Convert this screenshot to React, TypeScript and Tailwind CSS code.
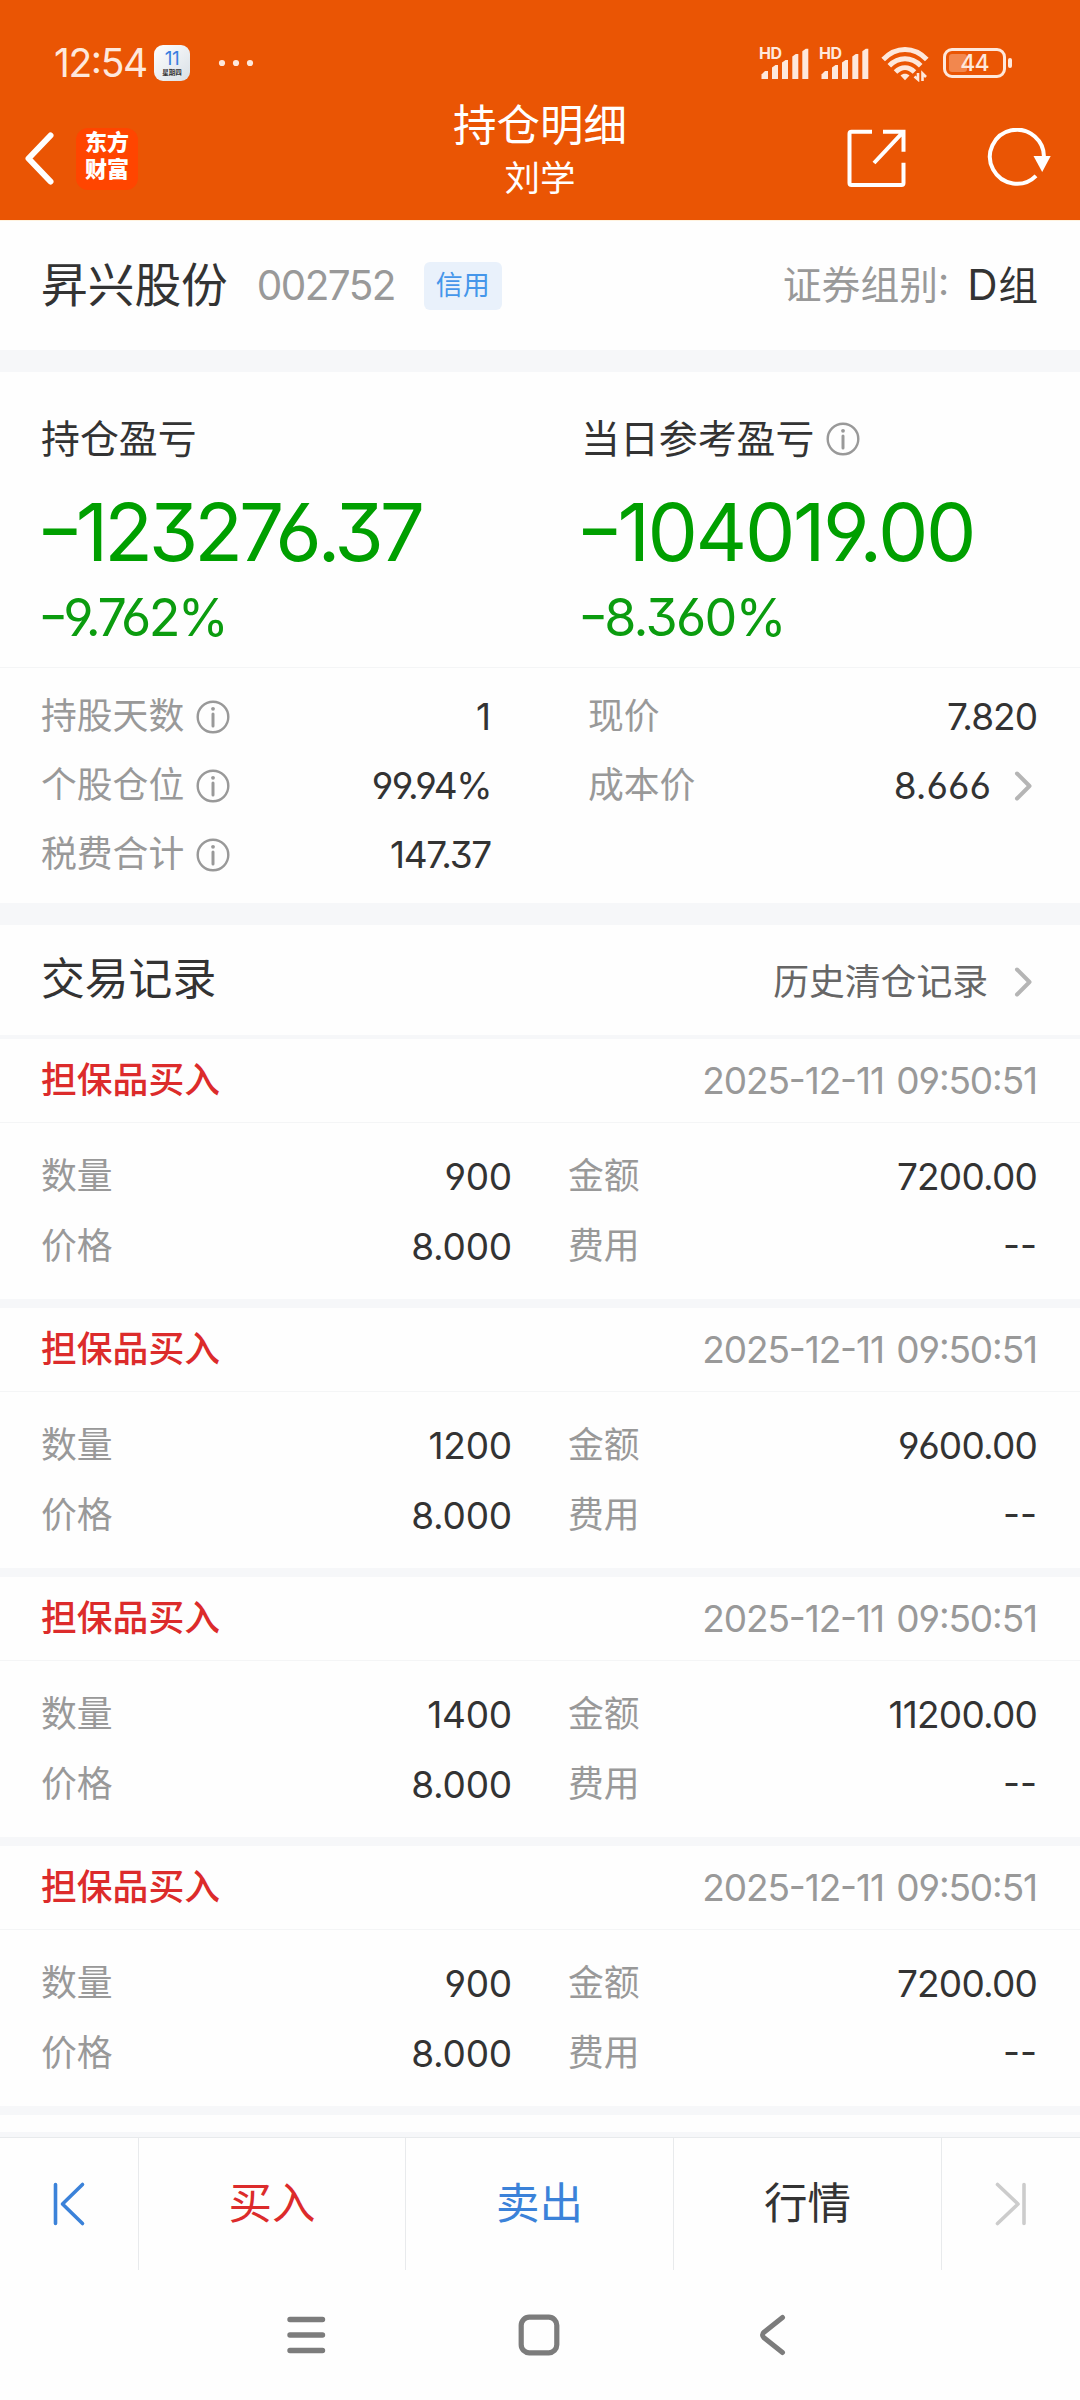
import { clsx } from "clsx";

const records = [
  { type: "担保品买入", time: "2025-12-11 09:50:51", qty: "900", amount: "7200.00", price: "8.000", fee: "--" },
  { type: "担保品买入", time: "2025-12-11 09:50:51", qty: "1200", amount: "9600.00", price: "8.000", fee: "--" },
  { type: "担保品买入", time: "2025-12-11 09:50:51", qty: "1400", amount: "11200.00", price: "8.000", fee: "--" },
  { type: "担保品买入", time: "2025-12-11 09:50:51", qty: "900", amount: "7200.00", price: "8.000", fee: "--" },
];

function Signal() {
  return (
    <div className="relative w-[51px] h-9">
      <span className="absolute left-0 top-0 text-[16px] leading-none font-bold tracking-[-0.4px]">HD</span>
      <svg width="51" height="36" viewBox="0 0 51 36" fill="currentColor">
        <path d="M2.5 34V29.5L6 26H9V34Z" />
        <path d="M13 34V22.5L16.5 20H19V34Z" />
        <path d="M23 34V17.5L26.5 15H29V34Z" />
        <path d="M33.3 34V11.5L36.8 9H39.3V34Z" />
        <path d="M43.3 34V6.2L46.8 3.7H49.3V34Z" />
      </svg>
    </div>
  );
}

function InfoIcon() {
  return (
    <svg width="34" height="34" viewBox="0 0 34 34" fill="none" className="text-[#999]">
      <circle cx="17" cy="17" r="15.3" stroke="currentColor" strokeWidth="2.4" />
      <circle cx="17" cy="8.8" r="1.9" fill="currentColor" />
      <path d="M17 14V26" stroke="currentColor" strokeWidth="3" strokeLinecap="round" />
    </svg>
  );
}

function Chevron() {
  return (
    <svg width="20" height="32" viewBox="0 0 20 32" fill="none" stroke="#b5b5b5" strokeWidth="4" strokeLinecap="round" strokeLinejoin="round">
      <path d="M4 3.5L16.5 16L4 28.5" />
    </svg>
  );
}

function Header() {
  return (
    <header className="h-[220px] bg-[#ea5504] text-white">
      <div className="flex items-start pt-[45px] pl-[54px] pr-[68px] text-[#fee8dc]">
        <span className="w-[100px] text-[39px] leading-9 tracking-[-1.4px] whitespace-nowrap">12:54</span>
        <div className="flex w-9 h-9 flex-col items-center rounded-[9px] bg-linear-to-br from-white to-[#d9e0e6] pt-[6px]">
          <span className="text-[19px] leading-[16px] tracking-[-0.5px] text-[#3b7fe0]">11</span>
          <span className="mt-[2px] text-[6.5px] leading-[8px] font-bold text-[#333]">星期四</span>
        </div>
        <svg width="36" height="36" viewBox="0 0 36 36" fill="currentColor" className="ml-7">
          <circle cx="4" cy="18" r="3.1" />
          <circle cx="18" cy="18" r="3.1" />
          <circle cx="32" cy="18" r="3.1" />
        </svg>
        <div className="ml-auto flex">
          <Signal />
          <div className="ml-[9px]">
            <Signal />
          </div>
          <svg width="48" height="37" viewBox="0 0 48 37" fill="none" stroke="currentColor" strokeWidth="5" className="ml-[11px] mr-px">
            <path d="M2.2 14.5C15 1.2 33 1.2 45.8 14.5" />
            <path d="M8.3 20.8C17.5 11.5 30.5 11.5 39.7 20.8" />
            <path d="M14.5 27C20.3 21.3 27.7 21.3 33.5 27" />
            <path d="M19.5 30.5C22 28 26 28 28.5 30.5L24 35.2Z" fill="currentColor" stroke="none" />
            <path d="M37 28V34.5L33.5 31.5M41.5 36V28.5L45 32" strokeWidth="2.6" />
          </svg>
          <div className="relative ml-[13px] mt-[3px] h-[30px] w-[63px] rounded-[9px] border-[3px] border-current p-[3px]">
            <div className="h-[18px] w-[18px] rounded-[3px] bg-[#f2874e]" />
            <span className="absolute inset-0 text-center text-[23px] leading-6 font-medium tracking-[-0.8px]">44</span>
          </div>
          <div className="ml-[2px] mt-[13px] h-[10px] w-1 rounded-sm bg-current" />
        </div>
      </div>

      <div className="grid h-[139px] grid-cols-[1fr_auto_1fr] items-start">
        <div className="flex pl-[23px] pt-[46px]">
          <svg width="32" height="62" viewBox="0 0 32 62" fill="none" stroke="#fff" strokeWidth="6" strokeLinecap="round" strokeLinejoin="round">
            <path d="M27.5 7.5L5.5 30.5L27.5 53.5" />
          </svg>
          <div className="ml-[21px] flex h-[62px] w-[62px] flex-col items-center rounded-[12px] bg-[#ff4500] pt-px text-[22px] leading-[27px] font-black">
            <span>东方</span>
            <span>财富</span>
          </div>
        </div>
        <div className="flex flex-col items-center pt-4">
          <h1 className="text-[43.5px] leading-[54px]">持仓明细</h1>
          <span className="text-[35.5px] leading-[54px]">刘学</span>
        </div>
        <div className="flex justify-end pr-[27px] pt-[46px]">
          <svg width="62" height="62" viewBox="0 0 62 62" fill="none" stroke="#fff" strokeWidth="4" strokeLinejoin="round">
            <path d="M27 3.7H6.5Q4.5 3.7 4.5 5.7V55Q4.5 57 6.5 57H56.5Q58.5 57 58.5 55V34.7" />
            <path d="M38 3.7H58.5V23.7M58 4.2L29 35" strokeLinejoin="miter" />
          </svg>
          <svg width="68" height="62" viewBox="0 0 68 62" fill="none" stroke="#fff" strokeWidth="4" className="ml-[78px]">
            <path d="M58.8 31A27 27 0 1 0 51 47.8" />
            <path d="M48.5 28H65.7L57.2 44Z" fill="#fff" stroke="none" />
          </svg>
        </div>
      </div>
    </header>
  );
}

type DetailProps = { label: string; value: string; valueClass?: string; info?: boolean; arrow?: boolean };

function Detail({ label, value, valueClass, info, arrow }: DetailProps) {
  return (
    <div className="flex h-[69px] items-center">
      <span className="mr-3 pt-px text-[35.8px] text-[#999]">{label}</span>
      {info && <InfoIcon />}
      <span className={clsx("ml-auto text-[37px]", valueClass)}>{value}</span>
      {arrow && (
        <div className="ml-[22px] mr-1">
          <Chevron />
        </div>
      )}
    </div>
  );
}

type PnlProps = { label: string; amount: string; percent: string; amountClass: string; percentClass: string; info?: boolean };

function Pnl({ label, amount, percent, amountClass, percentClass, info }: PnlProps) {
  return (
    <div>
      <div className="flex h-[50px] items-center gap-3 text-[38.9px]">
        {label}
        {info && <InfoIcon />}
      </div>
      <div className={clsx("mt-[18px] text-[80px] leading-[100px] text-[#009f00]", amountClass)}>
        <span className="mr-[2px] inline-block scale-x-130">-</span>
        {amount}
      </div>
      <div className={clsx("mt-[6px] text-[52px] leading-[60px] text-[#0b9c0f]", percentClass)}>
        <span className="mr-px inline-block scale-x-125">-</span>
        {percent}
      </div>
    </div>
  );
}

function Field({ label, value, valueClass }: { label: string; value: string; valueClass: string }) {
  return (
    <div className="flex h-[70px] items-center justify-between">
      <span className="pt-px text-[35.8px] text-[#999]">{label}</span>
      <span className={clsx("text-[37px]", valueClass)}>{value}</span>
    </div>
  );
}

export default function App() {
  return (
    <div
      className="flex h-[2400px] w-[1080px] flex-col overflow-hidden bg-[#fefefe] leading-none text-[#333] font-['Inter','Noto_Sans_CJK_SC',sans-serif] [font-feature-settings:'cv03','cv04','cv09','case']"
    >
      <Header />

      <section className="flex h-[130px] items-center border-t border-[#fff3df] pl-[41px] pr-[42px]">
        <h2 className="text-[46.7px]">昇兴股份</h2>
        <span className="ml-[29px] mt-[2px] text-[40.5px] tracking-[-1.6px] text-[#999]">002752</span>
        <span className="ml-[29px] flex h-12 w-[78px] items-center justify-center rounded-md bg-[#e9f1fb] text-[27px] text-[#4596ea]">
          信用
        </span>
        <span className="ml-auto text-[38.8px] text-[#999]">证券组别:</span>
        <span className="ml-[18px] text-[39.5px]">
          <span className="mr-px text-[42px]">D</span>组
        </span>
      </section>
      <div className="h-[22px] bg-[#f6f7f9]" />

      <section>
        <div className="grid h-[295px] grid-cols-[540px_1fr] pl-[41px] pt-[42px]">
          <Pnl label="持仓盈亏" amount="123276.37" percent="9.762%" amountClass="tracking-[-4.1px]" percentClass="tracking-[-2.6px]" />
          <Pnl label="当日参考盈亏" amount="104019.00" percent="8.360%" amountClass="tracking-[-2.4px]" percentClass="tracking-[-1.7px]" info />
        </div>
        <div className="flex h-[236px] justify-between border-t border-[#f4f5f6] pl-[41px] pr-[43px] pt-[14px]">
          <div className="w-[450px]">
            <Detail label="持股天数" value="1" info />
            <Detail label="个股仓位" value="99.94%" valueClass="tracking-[-1.5px]" info />
            <Detail label="税费合计" value="147.37" valueClass="tracking-[-1.3px]" info />
          </div>
          <div className="w-[449px]">
            <Detail label="现价" value="7.820" valueClass="tracking-[-1px]" />
            <Detail label="成本价" value="8.666" arrow />
          </div>
        </div>
      </section>
      <div className="h-[22px] bg-[#f6f7f9]" />

      <section className="flex h-[114px] items-center border-b-4 border-[#f6f7f9] pl-[41px] pr-[47px]">
        <h2 className="text-[43.8px]">交易记录</h2>
        <span className="ml-auto mr-[25px] mt-[6px] text-[35.8px] text-[#666]">历史清仓记录</span>
        <div className="mt-[3px]">
          <Chevron />
        </div>
      </section>

      {records.map((r, i) => (
        <article key={i} className="h-[269px] shrink-0 border-b-[9px] border-[#f6f7f9]">
          <div className="flex h-[84px] items-center justify-between border-b border-[#f4f5f6] pl-[41px] pr-[43px]">
            <span className="pt-px text-[35.8px] font-medium text-[#dc2b2b]">{r.type}</span>
            <span className="text-[37px] tracking-[-1.1px] [word-spacing:3px] text-[#999]">{r.time}</span>
          </div>
          <div className="grid grid-cols-[471px_469px] justify-between pl-[41px] pr-[43px] pt-[18px]">
            <Field label="数量" value={r.qty} valueClass="tracking-[-0.2px]" />
            <Field label="金额" value={r.amount} valueClass="tracking-[-0.8px]" />
            <Field label="价格" value={r.price} valueClass="tracking-[-0.2px]" />
            <Field label="费用" value={r.fee} valueClass="tracking-[0px]" />
          </div>
        </article>
      ))}

      <div className="mt-[17px] h-[5px] shrink-0 bg-[#f6f7f9]" />
      <footer className="grid h-[133px] shrink-0 grid-cols-[139px_267px_268px_268px_1fr] divide-x divide-[#e8eaec] border-t border-[#e8eaec] text-[43.5px]">
        <button className="flex items-center justify-center">
          <svg width="34" height="48" viewBox="0 0 34 48" fill="none" stroke="#3b82d9" strokeWidth="3.6" strokeLinecap="round" strokeLinejoin="round">
            <path d="M3.5 4.5V43.5M30.5 4.5L10.5 24L30.5 43.5" />
          </svg>
        </button>
        <button className="text-[#dc2b2b]">买入</button>
        <button className="text-[#3b82d9]">卖出</button>
        <button>行情</button>
        <button className="flex items-center justify-center">
          <svg width="34" height="48" viewBox="0 0 34 48" fill="none" stroke="#ccc" strokeWidth="3.6" strokeLinecap="round" strokeLinejoin="round">
            <path d="M30 4.5V43.5M3.5 4.5L24 24L3.5 43.5" />
          </svg>
        </button>
      </footer>

      <nav className="flex h-[130px] shrink-0 items-center pl-[286px]">
        <svg width="40" height="42" viewBox="0 0 40 42" fill="none" stroke="#7c7c7c" strokeWidth="5.4" strokeLinecap="round">
          <path d="M4 5.5H36.5M4 21H36.5M4 36.5H36.5" />
        </svg>
        <svg width="42" height="42" viewBox="0 0 42 42" fill="none" stroke="#7c7c7c" strokeWidth="5.2" className="ml-[192px]">
          <rect x="3.2" y="3.2" width="35.6" height="35.6" rx="8" />
        </svg>
        <svg width="28" height="42" viewBox="0 0 28 42" fill="none" stroke="#7c7c7c" strokeWidth="5" strokeLinecap="round" strokeLinejoin="round" className="ml-[198px]">
          <path d="M24.5 3.5L6 18.2Q3 21 6 23.8L24.5 38.5" />
        </svg>
      </nav>
    </div>
  );
}
